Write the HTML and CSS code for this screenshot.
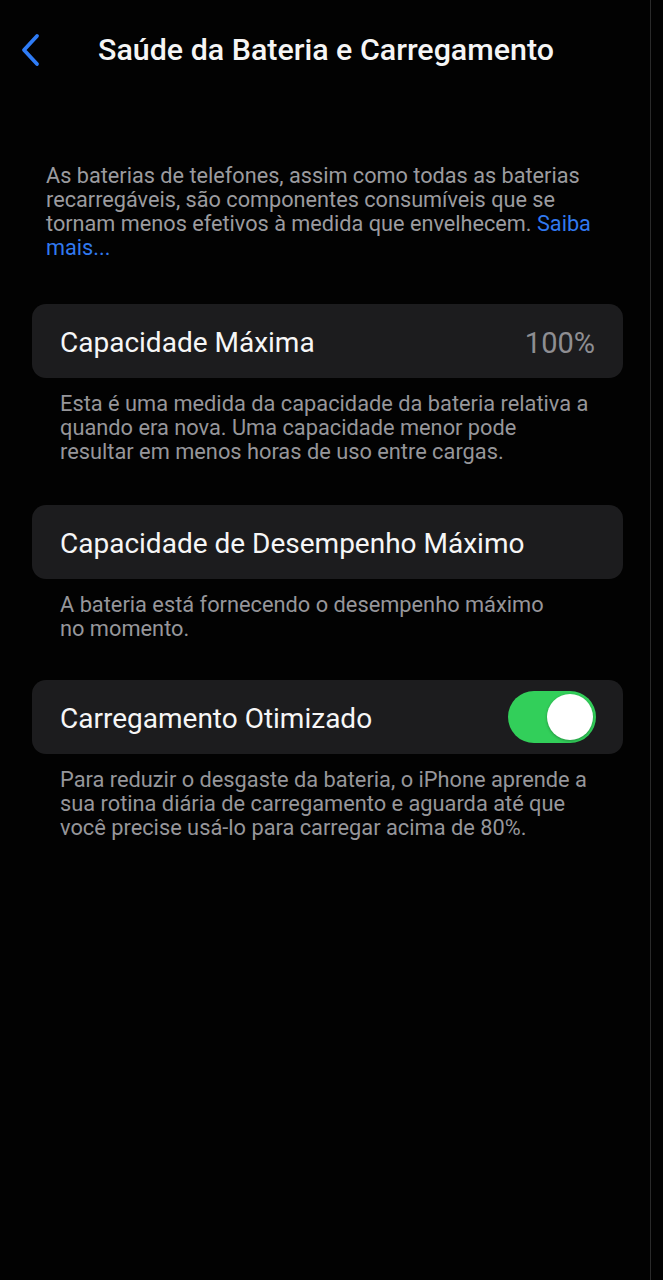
FILE: index.html
```html
<!DOCTYPE html>
<html lang="pt-BR">
<head>
<meta charset="utf-8">
<link rel="stylesheet" href="styles.css">
</head>
<body>
<div class="frame">
  <main class="screen">
    <header class="nav">
      <span class="back">
        <svg width="22" height="34" viewBox="0 0 22 34"><path d="M18 3 L5 17 L18 31" fill="none" stroke="#2f7cf6" stroke-width="3.8" stroke-linecap="round" stroke-linejoin="round"/></svg>
      </span>
      <h1 class="title">Saúde da Bateria e Carregamento</h1>
    </header>

    <p class="intro">As baterias de telefones, assim como todas as baterias<br>recarregáveis, são componentes consumíveis que se<br>tornam menos efetivos à medida que envelhecem. <a class="link">Saiba<br>mais...</a></p>

    <section class="card">
      <span class="label">Capacidade Máxima</span>
      <span class="value">100%</span>
    </section>
    <p class="foot">Esta é uma medida da capacidade da bateria relativa a<br>quando era nova. Uma capacidade menor pode<br>resultar em menos horas de uso entre cargas.</p>

    <section class="card">
      <span class="label">Capacidade de Desempenho Máximo</span>
    </section>
    <p class="foot">A bateria está fornecendo o desempenho máximo<br>no momento.</p>

    <section class="card card-last">
      <span class="label">Carregamento Otimizado</span>
      <span class="toggle"><span class="knob"></span></span>
    </section>
    <p class="foot">Para reduzir o desgaste da bateria, o iPhone aprende a<br>sua rotina diária de carregamento e aguarda até que<br>você precise usá-lo para carregar acima de 80%.</p>
  </main>
  <div class="edge"></div>
</div>
</body>
</html>
```

FILE: styles.css
```css
* { box-sizing: border-box; }
html, body { margin: 0; padding: 0; background: #020202; }
body {
  font-family: Roboto, "Noto Sans", "Liberation Sans", sans-serif;
  color: #f2f2f2;
}
.frame {
  display: flex;
  min-height: 1280px;
}
.screen {
  width: 650px;
  flex: none;
}
.edge {
  width: 1px;
  background: #2a2a2a;
  flex: none;
}
.nav {
  display: flex;
  align-items: center;
  height: 100px;
  padding-left: 19px;
}
.back {
  display: flex;
  width: 22px;
  height: 34px;
}
.title {
  margin: 0 0 0 57px;
  font-size: 30.4px;
  font-weight: 500;
  line-height: 36px;
  color: #f5f5f5;
}
.intro {
  margin: 64px 0 0 46px;
  font-size: 21.7px;
  line-height: 24px;
  color: #9b9b9f;
  white-space: nowrap;
}
.link { color: #3179f0; }
.card {
  margin: 44px 0 0 32px;
  width: 591px;
  height: 74px;
  background: #1c1c1e;
  border-radius: 14px;
  display: flex;
  align-items: center;
  justify-content: space-between;
  padding: 3px 28px 0;
}
.foot + .card { margin-top: 41px; }
.foot + .card-last { margin-top: 39px; }
.label {
  font-size: 28px;
  color: #f6f6f6;
}
.value {
  font-size: 29px;
  color: #8e8e92;
}
.foot {
  margin: 14px 0 0 60px;
  font-size: 21.8px;
  line-height: 24px;
  color: #96969a;
  white-space: nowrap;
}
.toggle {
  width: 88px;
  height: 52px;
  border-radius: 26px;
  background: #32cf5a;
  display: flex;
  align-items: center;
  justify-content: flex-end;
  padding: 3px;
  margin: -3px -1px 0 0;
}
.knob {
  width: 46px;
  height: 46px;
  border-radius: 50%;
  background: #ffffff;
  box-shadow: 0 1px 3px rgba(0,0,0,0.3);
}
```
